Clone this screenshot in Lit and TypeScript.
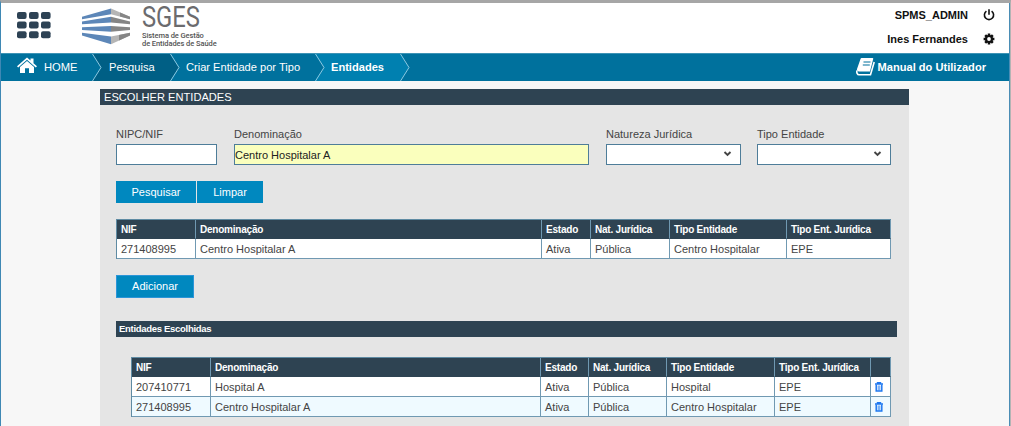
import { LitElement, html, css, svg } from "lit";
import { customElement } from "lit/decorators.js";

const COLS = ["NIF", "Denominação", "Estado", "Nat. Jurídica", "Tipo Entidade", "Tipo Ent. Jurídica"];
const FOUND = [["271408995", "Centro Hospitalar A", "Ativa", "Pública", "Centro Hospitalar", "EPE"]];
const CHOSEN = [
  ["207410771", "Hospital A", "Ativa", "Pública", "Hospital", "EPE"],
  ["271408995", "Centro Hospitalar A", "Ativa", "Pública", "Centro Hospitalar", "EPE"],
];

@customElement("app-root")
export class AppRoot extends LitElement {
  static styles = css`
    :host { display: block; box-sizing: border-box; width: 1011px; height: 426px; overflow: hidden; background: #f7f7f7;
      border-top: 3px solid #a6a6a6; border-left: 1px solid #3f88b4; border-right: 1px solid #b4b4b4;
      font-family: "Liberation Sans", Arial, sans-serif; font-size: 11px; color: #444; }
    * { box-sizing: border-box; }
    .page { border-right: 1px solid #4a8db5; height: 423px; }
    svg { display: block; flex: none; }
    header { height: 50px; background: #fff; display: flex; }
    .apps { margin: 9px 0 0 16px; }
    .mark { margin: 5px 0 0 31px; }
    .brand { margin: 0 0 0 11px; color: #555; font-family: Roboto, sans-serif; white-space: nowrap; }
    .name { font-size: 29px; line-height: 29px; height: 29px; color: #6b6b6e; transform: scaleX(.82); transform-origin: 0 0; }
    .sub { font-size: 7.5px; line-height: 8px; font-weight: 500; letter-spacing: -.08px; }
    .user { margin: 0 14px 0 auto; font-weight: bold; color: #111; }
    .user div { display: flex; height: 24px; align-items: center; justify-content: flex-end; }
    .user svg { margin-left: 15px; }
    nav { height: 28px; background: #00719d; border-top: 1px solid #3d93b5; color: #fff; display: flex; font-size: 11.1px; line-height: 27px; white-space: nowrap; }
    nav svg { height: 27px; }
    .seg { display: flex; align-items: center; }
    .home { width: 91px; padding-left: 16px; font-size: 11.2px; }
    .home svg { margin: -5px 7px 0 0; height: 16px; }
    .s1 { width: 68px; padding-left: 7px; background: #005f85; }
    .s2 { width: 135px; padding-left: 6px; }
    .s3 { width: 75px; padding-left: 6px; background: #0080b0; font-weight: bold; }
    .manual { margin: 0 23px 0 auto; font-weight: bold; }
    .manual svg { height: 20px; margin: -2px 3px 0 0; }
    main { width: 809px; height: 337px; margin: 8px 0 0 99px; background: #e5e5e5; }
    .title { height: 16px; line-height: 16px; padding-left: 4px; color: #fff; background: #2e4352; font-size: 11.1px; }
    .form { display: flex; padding: 22px 0 0 16px; }
    .field { display: flex; flex-direction: column; }
    .field label { height: 17px; line-height: 14px; white-space: nowrap; }
    .box { height: 21px; border: 1px solid #4e7d99; background: #fff; line-height: 20px; color: #222; display: flex; align-items: center; justify-content: flex-end; }
    .fill { background: #faffbd; justify-content: flex-start; }
    .box svg { margin: -2px 8px 0 0; }
    .f1 { width: 101px; } .f2 { width: 355px; margin-left: 17px; } .f3 { width: 135px; margin-left: 17px; } .f4 { width: 134px; margin-left: 16px; }
    .btns { display: flex; margin: 16px 0 0 16px; gap: 1px; }
    .btn { height: 22px; line-height: 22px; text-align: center; background: #0088bf; color: #fff; }
    .b1 { width: 80px; } .b2 { width: 66px; }
    .b3 { width: 78px; height: 23px; margin: 16px 0 0 16px; line-height: 21px; border: 1px solid #2b95d8; }
    .grid { display: grid; border: 1px solid #5f8ba3; border-width: 1px 0 0 1px; color: #444; white-space: nowrap; }
    .g1 { width: 775px; margin: 16px 0 0 16px; grid-template-columns: 79px 346px 49px 79px 117px 104px; grid-template-rows: 19px 20px; }
    .g2 { width: 760px; margin: 20px 0 0 31px; grid-template-columns: 79px 330px 48px 78px 108px 96px 20px; grid-template-rows: 19px 20px 20px; }
    .cell { border: 1px solid #7099b2; border-width: 0 1px 1px 0; background: #fff; padding-left: 4px; line-height: 20px; }
    .cell svg { margin: 5px 0 0; }
    .alt { background: #effaff; }
    .head { background: #2e4352; color: #fff; font-weight: bold; font-size: 10px; letter-spacing: -.22px; line-height: 19px; border-bottom-color: #2e4352; }
    .section { width: 781px; height: 16px; line-height: 15px; margin: 23px 0 0 16px; padding-left: 3px; background: #2e4352; color: #fff; font-weight: bold; font-size: 9.5px; letter-spacing: -.3px; }
  `;

  chevron(from: string, to: string) {
    return html`<svg width="10" height="27" viewBox="0 0 10 27"><rect width="10" height="27" fill=${to} /><path d="M0 0 9 13.5 0 27Z" fill=${from} /><path d="M.5 0 9 13.5 .5 27" fill="none" stroke="#8bc9e2" /></svg>`;
  }

  arrow() {
    return html`<svg width="9" height="6" viewBox="0 0 9 6"><path d="M1.5 1 4.5 4 7.5 1" fill="none" stroke="#444" stroke-width="1.9" /></svg>`;
  }

  trash() {
    return html`<svg width="8" height="10" viewBox="0 0 8 10" fill="none" stroke="#1f78f0"><path d="M0 2h8M2.5 2V.6h3V2" stroke-width="1.4" /><path d="M1.2 2.5v6.6h5.6V2.5" stroke-width="1.5" /><path d="M3.2 3.5v5M4.8 3.5v5" stroke-width=".8" /></svg>`;
  }

  head(extra = false) {
    return html`${COLS.map((c) => html`<div class="cell head">${c}</div>`)}${extra ? html`<div class="cell head"></div>` : ""}`;
  }

  render() {
    const base = "#00719d";
    return html`<div class="page">
      <header>
        <svg class="apps" width="34" height="27" viewBox="0 0 34 27" fill="#2d4254">
          ${[0, 9.6, 19.2].map((y) => [0, 12, 24].map((x) => svg`<rect x=${x} y=${y} width="9.6" height="7" rx="2" />`))}
        </svg>
        <svg class="mark" width="49" height="38" viewBox="0 0 49 38">
          <g fill="#5d87b8">
            <path d="M0 8.8 29 .6v5.6L0 11.2Z" /><path d="M0 13.6 29 8.8v5.6L0 16.3Z" />
            <path d="M0 19.3 29 18v5.8L0 22Z" /><path d="M0 24.8 29 28.5v7.8L0 27.4Z" />
          </g>
          <g fill="#858585">
            <path d="M29 .6 48 8.8v2.4L29 6.2Z" fill="#b5b5b5" /><path d="M38 4.5 48 8.8v2.4L38 8.6Z" /><path d="M29 8.8 48 13.6v2.7L29 14.4Z" />
            <path d="M29 18 48 19.3V22L29 23.8Z" /><path d="M29 28.5 48 24.8v2.6L29 36.3Z" fill="#b5b5b5" /><path d="M37 27 48 24.8v2.6L37 32.5Z" />
          </g>
        </svg>
        <div class="brand"><div class="name">SGES</div><div class="sub">Sistema de Gestão<br />de Entidades de Saúde</div></div>
        <div class="user">
          <div>SPMS_ADMIN<svg width="12" height="12" viewBox="0 0 12 12" fill="none" stroke="#111" stroke-width="1.6"><path d="M3.4 2.2a4.6 4.6 0 1 0 5.2 0M6 .3v5.5" /></svg></div>
          <div>Ines Fernandes<svg width="12" height="12" viewBox="0 0 12 12"><g stroke="#111" stroke-width="2.5"><path d="M6 .6v10.8M.6 6h10.8M2.2 2.2l7.6 7.6M9.8 2.2 2.2 9.8" /></g><circle cx="6" cy="6" r="4" fill="#111" /><circle cx="6" cy="6" r="1.9" fill="#fff" /></svg></div>
        </div>
      </header>
      <nav>
        <div class="seg home"><svg width="20" height="16" viewBox="0 0 20 17" preserveAspectRatio="none" fill="#fff"><path d="M10 .5 13.5 3.8V1.5h3v5.1L20 9.8l-1.2 1.3L10 3 1.2 11.1 0 9.8Z" /><path d="M3 10.5 10 4.2l7 6.3V17h-5v-5H8v5H3Z" /></svg>HOME</div>
        ${this.chevron(base, "#005f85")}
        <div class="seg s1">Pesquisa</div>${this.chevron("#005f85", base)}
        <div class="seg s2">Criar Entidade por Tipo</div>${this.chevron(base, "#0080b0")}
        <div class="seg s3">Entidades</div>${this.chevron("#0080b0", base)}
        <div class="seg manual"><svg width="19" height="20" viewBox="0 0 19 20"><path d="M5.5 1h11q1 0 .7 1L14 14.5H3.2C1.5 14.5.6 13.5 1 12L4.5 2Q4.800 1 5.500 1Z" fill="#fff" /><path d="M1 13.500c-.6 2 .3 4.300 2 4.300h11.500L18.200 5" fill="none" stroke="#fff" stroke-width="1.600" /><path d="M7.500 5h7M6.800 8h7" stroke="#00719d" stroke-width="1.200" /></svg>Manual do Utilizador</div>
      </nav>
      <main>
        <div class="title">ESCOLHER ENTIDADES</div>
        <div class="form">
          <div class="field f1"><label>NIPC/NIF</label><div class="box"></div></div>
          <div class="field f2"><label>Denominação</label><div class="box fill">Centro Hospitalar A</div></div>
          <div class="field f3"><label>Natureza Jurídica</label><div class="box">${this.arrow()}</div></div>
          <div class="field f4"><label>Tipo Entidade</label><div class="box">${this.arrow()}</div></div>
        </div>
        <div class="btns"><div class="btn b1">Pesquisar</div><div class="btn b2">Limpar</div></div>
        <div class="grid g1">${this.head()}${FOUND.map((r) => r.map((c) => html`<div class="cell">${c}</div>`))}</div>
        <div class="btn b3">Adicionar</div>
        <div class="section">Entidades Escolhidas</div>
        <div class="grid g2">${this.head(true)}${CHOSEN.map((r, i) => html`${r.map((c) => html`<div class="cell ${i ? "alt" : ""}">${c}</div>`)}<div class="cell ${i ? "alt" : ""}">${this.trash()}</div>`)}</div>
      </main>
    </div>`;
  }
}
